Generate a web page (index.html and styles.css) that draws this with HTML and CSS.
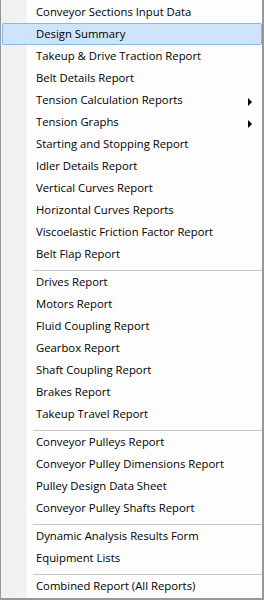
FILE: index.html
```html
<!DOCTYPE html>
<html lang="en">
<head>
    <meta charset="UTF-8">
    <meta name="viewport" content="width=device-width, initial-scale=1.0">
    <title>Reports Menu</title>
    <link rel="stylesheet" href="styles.css">
</head>
<body>
    <ul class="menu">
        <li class="item">Conveyor Sections Input Data</li>
        <li class="item active">Design Summary</li>
        <li class="item">Takeup &amp; Drive Traction Report</li>
        <li class="item">Belt Details Report</li>
        <li class="item sub">Tension Calculation Reports</li>
        <li class="item sub">Tension Graphs</li>
        <li class="item">Starting and Stopping Report</li>
        <li class="item">Idler Details Report</li>
        <li class="item">Vertical Curves Report</li>
        <li class="item">Horizontal Curves Reports</li>
        <li class="item">Viscoelastic Friction Factor Report</li>
        <li class="item">Belt Flap Report</li>
        <li class="sep"></li>
        <li class="item">Drives Report</li>
        <li class="item">Motors Report</li>
        <li class="item">Fluid Coupling Report</li>
        <li class="item">Gearbox Report</li>
        <li class="item">Shaft Coupling Report</li>
        <li class="item">Brakes Report</li>
        <li class="item">Takeup Travel Report</li>
        <li class="sep"></li>
        <li class="item">Conveyor Pulleys Report</li>
        <li class="item">Conveyor Pulley Dimensions Report</li>
        <li class="item">Pulley Design Data Sheet</li>
        <li class="item">Conveyor Pulley Shafts Report</li>
        <li class="sep"></li>
        <li class="item">Dynamic Analysis Results Form</li>
        <li class="item">Equipment Lists</li>
        <li class="sep"></li>
        <li class="item">Combined Report (All Reports)</li>
    </ul>
</body>
</html>
```

FILE: styles.css
```css
body {
    margin: 0;
    width: 264px;
    height: 600px;
    overflow: hidden;
    font-family: "Open Sans", "Liberation Sans", sans-serif;
    font-size: 11.3px;
    color: #000;
}
.menu {
    list-style: none;
    margin: 0;
    padding: 1px 0 0 0;
    height: 600px;
    box-sizing: border-box;
    border-left: 1px solid #979797;
    border-right: 2px solid #979797;
    border-bottom: 2px solid #979797;
    background: linear-gradient(to right, #f0f0f0 0, #f3f3f3 24px, #ececec 24px, #ececec 25px, #fdfdfd 25px);
}
.item {
    position: relative;
    height: 22px;
    line-height: 20px;
    margin-left: 1px;
    padding-left: 33px;
    border: 1px solid transparent;
    border-radius: 2px;
    box-sizing: border-box;
    white-space: nowrap;
}
.item.active {
    background: #cde4fa;
    border-color: #84b8ec;
}
.item.sub::after {
    content: "";
    position: absolute;
    right: 9px;
    top: 8px;
    border-left: 4px solid #000;
    border-top: 4px solid transparent;
    border-bottom: 4px solid transparent;
}
.sep {
    height: 6px;
    margin-left: 32px;
    padding-top: 5px;
    box-sizing: border-box;
}
.sep::before {
    content: "";
    display: block;
    height: 1px;
    background: #c5c5c5;
}
```
